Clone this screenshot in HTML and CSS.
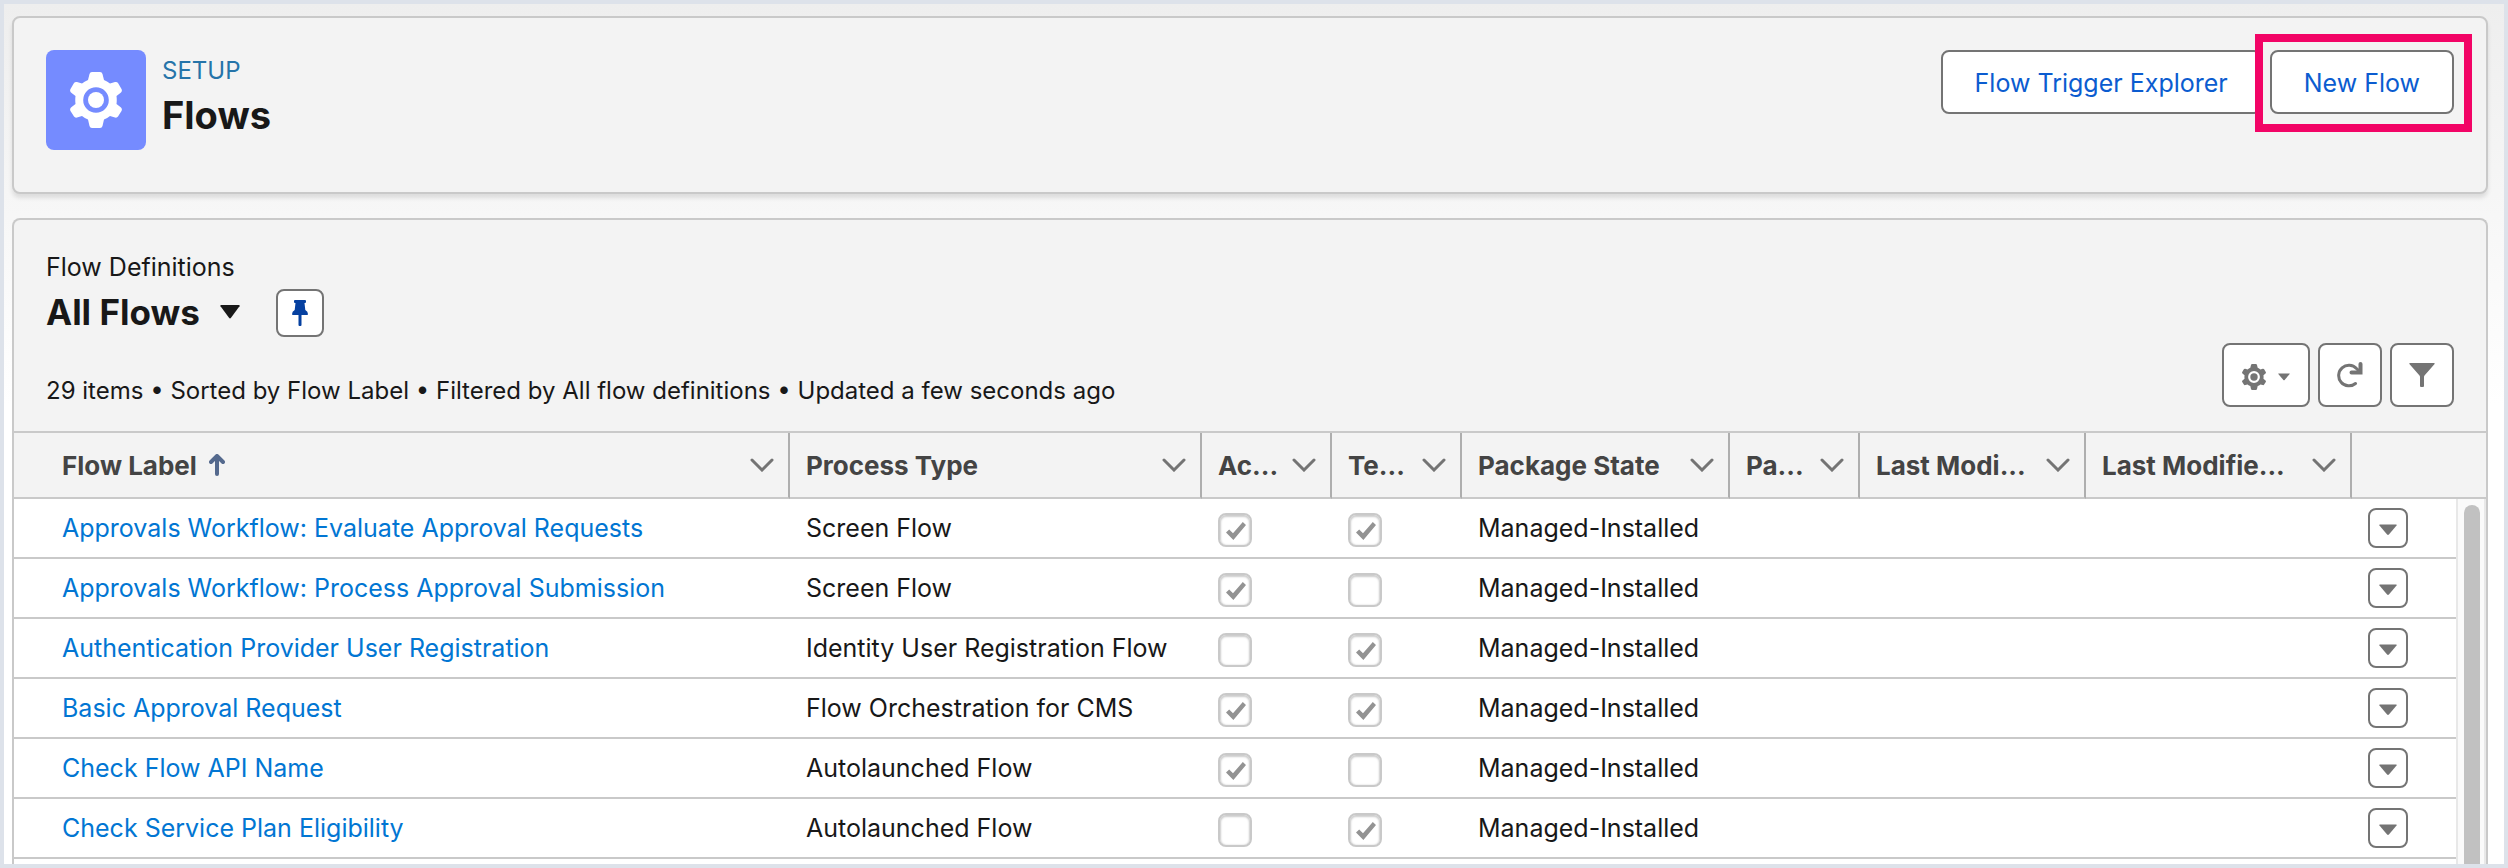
FILE: index.html
```html
<!DOCTYPE html>
<html lang="en">

<head>
    <meta charset="UTF-8">
    <meta name="viewport" content="width=device-width, initial-scale=1.0">
    <title>Flows | Setup</title>
    <link rel="stylesheet" href="styles.css">
</head>

<body>

    <!-- Shared icons -->
    <svg class="sprite" aria-hidden="true">
        <symbol id="gear" viewBox="0 0 52 56">
            <path fill="currentColor" fill-rule="evenodd" d="M22 0h8q2 0 2.500 2l1.500 6q3 1.200 6 3.500l5-1.500q2-.5 3 1l3.500 6q1 2-.5 3.500L46.500 24q.5 4 0 8l4.500 3.500q1.500 1.500.5 3.500L48 44.500q-1 1.500-3 1L40 44q-3 2.500-6 3.500L32.500 54q-.5 2-2.500 2h-8q-2 0-2.500-2L18 47.500q-3-1-6-3.500l-5 1.500q-2 .5-3-1L.5 39q-1-2 .5-3.500L5.500 32q-.5-4 0-8L1 20.500Q-.5 19 .5 17L4 11q1-1.500 3-1l5 1.500Q15 9.200 18 8l1.500-6Q20 0 22 0zM26 15.200a12.800 12.800 0 1 0 0 25.600a12.800 12.800 0 1 0 0-25.600z" />
            <circle cx="26" cy="28" r="8" fill="currentColor" />
        </symbol>
        <symbol id="chevron" viewBox="0 0 24 14">
            <path d="M2 2l10 10L22 2" fill="none" stroke="currentColor" stroke-width="3" stroke-linecap="round" />
        </symbol>
        <symbol id="down" viewBox="0 0 20 12">
            <path d="M1 0h18q1 0 .5 1L11 11q-1 1-2 0L.5 1Q0 0 1 0z" fill="currentColor" />
        </symbol>
    </svg>

    <main class="page">
        <header class="card page-header">
            <div class="header-icon">
                <svg width="52" height="56"><use href="#gear" /></svg>
            </div>
            <div class="header-text">
                <span class="eyebrow">SETUP</span>
                <h1>Flows</h1>
            </div>
            <div class="header-actions">
                <button class="button">Flow Trigger Explorer</button>
                <div class="highlighted">
                    <button class="button">New Flow</button>
                </div>
            </div>
        </header>

        <section class="card list-view">
            <div class="list-header">
                <div class="list-info">
                    <p class="list-object">Flow Definitions</p>
                    <div class="list-name">
                        <button class="list-switch">All Flows
                            <svg width="20" height="14" viewBox="0 0 20 12" preserveAspectRatio="none"><use href="#down" /></svg>
                        </button>
                        <button class="icon-button pin" aria-label="Pin this list view">
                            <svg width="16" height="26" viewBox="0 0 16 26">
                                <path fill="currentColor" d="M3 0h10q1 0 1 1v1q0 1-1 1h-.5l.8 7q2.700 1.500 2.700 4.200 0 .8-1 .8h-5.500v10q0 1-1 1h-1q-1 0-1-1V15H1q-1 0-1-.8Q0 11.500 2.700 10l.8-7H3Q2 3 2 2V1q0-1 1-1z" />
                            </svg>
                        </button>
                    </div>
                    <p class="list-meta">29 items • Sorted by Flow Label • Filtered by All flow definitions • Updated a few seconds ago</p>
                </div>
                <div class="list-actions">
                    <button class="icon-button wide" aria-label="List view controls">
                        <svg width="24" height="26"><use href="#gear" /></svg>
                        <svg width="12" height="8"><use href="#down" /></svg>
                    </button>
                    <button class="icon-button" aria-label="Refresh">
                        <svg width="26" height="26" viewBox="0 0 26 26">
                            <path d="M18.500 21.500A10.300 10.300 0 1 1 19.500 6.500L22 9" fill="none" stroke="currentColor" stroke-width="3" stroke-linecap="round" />
                            <path d="M23.500 2v8.500H14.500" fill="none" stroke="currentColor" stroke-width="4" stroke-linecap="round" />
                        </svg>
                    </button>
                    <button class="icon-button" aria-label="Filter">
                        <svg width="26" height="24" viewBox="0 0 26 24">
                            <path fill="currentColor" d="M1 0h24q1 0 .6 1L15.500 12.500Q15 13 15 14v9q0 1-1 1h-2q-1 0-1-1v-9q0-1-.5-1.500L.4 1Q0 0 1 0z" />
                        </svg>
                    </button>
                </div>
            </div>

            <div class="table-wrap">
                <table>
                    <colgroup>
                        <col>
                        <col class="col-type">
                        <col class="col-small">
                        <col class="col-small">
                        <col class="col-state">
                        <col class="col-small">
                        <col class="col-by">
                        <col class="col-date">
                        <col class="col-menu">
                    </colgroup>
                    <thead>
                        <tr>
                            <th scope="col"><div class="th"><span>Flow Label</span><svg class="sort" width="16" height="22" viewBox="0 0 16 22"><path d="M8 20V4" fill="none" stroke="currentColor" stroke-width="4" stroke-linecap="round" /><path d="M2 8l6-6 6 6" fill="none" stroke="currentColor" stroke-width="4" stroke-linecap="round" stroke-linejoin="round" /></svg><svg class="chevron" width="24" height="14"><use href="#chevron" /></svg></div></th>
                            <th scope="col"><div class="th"><span>Process Type</span><svg class="chevron" width="24" height="14"><use href="#chevron" /></svg></div></th>
                            <th scope="col"><div class="th"><span>Ac...</span><svg class="chevron" width="24" height="14"><use href="#chevron" /></svg></div></th>
                            <th scope="col"><div class="th"><span>Te...</span><svg class="chevron" width="24" height="14"><use href="#chevron" /></svg></div></th>
                            <th scope="col"><div class="th"><span>Package State</span><svg class="chevron" width="24" height="14"><use href="#chevron" /></svg></div></th>
                            <th scope="col"><div class="th"><span>Pa...</span><svg class="chevron" width="24" height="14"><use href="#chevron" /></svg></div></th>
                            <th scope="col"><div class="th"><span>Last Modi...</span><svg class="chevron" width="24" height="14"><use href="#chevron" /></svg></div></th>
                            <th scope="col"><div class="th"><span>Last Modifie...</span><svg class="chevron" width="24" height="14"><use href="#chevron" /></svg></div></th>
                            <th></th>
                        </tr>
                    </thead>
                    <tbody>
                        <tr>
                            <td><a href="#">Approvals Workflow: Evaluate Approval Requests</a></td>
                            <td>Screen Flow</td>
                            <td><input type="checkbox" aria-label="Active" checked disabled></td>
                            <td><input type="checkbox" aria-label="Template" checked disabled></td>
                            <td>Managed-Installed</td>
                            <td></td>
                            <td></td>
                            <td></td>
                            <td><button class="row-menu" aria-label="Show actions"><svg width="18" height="12"><use href="#down" /></svg></button></td>
                        </tr>
                        <tr>
                            <td><a href="#">Approvals Workflow: Process Approval Submission</a></td>
                            <td>Screen Flow</td>
                            <td><input type="checkbox" aria-label="Active" checked disabled></td>
                            <td><input type="checkbox" aria-label="Template" disabled></td>
                            <td>Managed-Installed</td>
                            <td></td>
                            <td></td>
                            <td></td>
                            <td><button class="row-menu" aria-label="Show actions"><svg width="18" height="12"><use href="#down" /></svg></button></td>
                        </tr>
                        <tr>
                            <td><a href="#">Authentication Provider User Registration</a></td>
                            <td>Identity User Registration Flow</td>
                            <td><input type="checkbox" aria-label="Active" disabled></td>
                            <td><input type="checkbox" aria-label="Template" checked disabled></td>
                            <td>Managed-Installed</td>
                            <td></td>
                            <td></td>
                            <td></td>
                            <td><button class="row-menu" aria-label="Show actions"><svg width="18" height="12"><use href="#down" /></svg></button></td>
                        </tr>
                        <tr>
                            <td><a href="#">Basic Approval Request</a></td>
                            <td>Flow Orchestration for CMS</td>
                            <td><input type="checkbox" aria-label="Active" checked disabled></td>
                            <td><input type="checkbox" aria-label="Template" checked disabled></td>
                            <td>Managed-Installed</td>
                            <td></td>
                            <td></td>
                            <td></td>
                            <td><button class="row-menu" aria-label="Show actions"><svg width="18" height="12"><use href="#down" /></svg></button></td>
                        </tr>
                        <tr>
                            <td><a href="#">Check Flow API Name</a></td>
                            <td>Autolaunched Flow</td>
                            <td><input type="checkbox" aria-label="Active" checked disabled></td>
                            <td><input type="checkbox" aria-label="Template" disabled></td>
                            <td>Managed-Installed</td>
                            <td></td>
                            <td></td>
                            <td></td>
                            <td><button class="row-menu" aria-label="Show actions"><svg width="18" height="12"><use href="#down" /></svg></button></td>
                        </tr>
                        <tr>
                            <td><a href="#">Check Service Plan Eligibility</a></td>
                            <td>Autolaunched Flow</td>
                            <td><input type="checkbox" aria-label="Active" disabled></td>
                            <td><input type="checkbox" aria-label="Template" checked disabled></td>
                            <td>Managed-Installed</td>
                            <td></td>
                            <td></td>
                            <td></td>
                            <td><button class="row-menu" aria-label="Show actions"><svg width="18" height="12"><use href="#down" /></svg></button></td>
                        </tr>
                    </tbody>
                </table>
                <div class="scrollbar"><div class="thumb"></div></div>
            </div>
        </section>
    </main>

</body>

</html>
```

FILE: styles.css
```css
* {
    box-sizing: border-box;
}

body {
    margin: 0;
    font-family: Inter, "Liberation Sans", sans-serif;
    font-size: 25px;
    color: #181818;
}

h1,
p {
    margin: 0;
}

button {
    font-family: inherit;
    cursor: pointer;
}

svg {
    display: block;
    flex-shrink: 0;
}

.sprite {
    position: absolute;
    width: 0;
    height: 0;
}

.page {
    height: 100vh;
    border: 4px solid #dde2ea;
    padding: 12px 16px 0 8px;
    background: linear-gradient(#eeeeee, #ffffff 400px);
    overflow: hidden;
    display: flex;
    flex-direction: column;
    gap: 24px;
}

.card {
    border: 2px solid #c9c9c9;
    border-radius: 8px;
    background-color: #f3f3f3;
}

/* Page header */
.page-header {
    display: flex;
    align-items: flex-start;
    padding: 32px 32px 42px;
    box-shadow: 0 4px 4px rgba(0, 0, 0, 0.1);
}

.header-icon {
    width: 100px;
    height: 100px;
    border-radius: 8px;
    background-color: #758bff;
    color: #fff;
    display: flex;
    align-items: center;
    justify-content: center;
}

.header-text {
    flex: 1;
    padding: 5px 0 0 16px;
}

.eyebrow {
    display: block;
    font-size: 24px;
    line-height: 32px;
    color: #2574a9;
}

h1 {
    font-size: 38px;
    line-height: 56px;
    font-weight: 700;
}

.header-actions {
    display: flex;
    gap: 8px;
}

.button {
    height: 64px;
    padding: 2px 32px 0;
    border: 2px solid #747474;
    border-radius: 8px;
    background-color: #fff;
    color: #0b5cd0;
    font-size: 25px;
    white-space: nowrap;
}

.highlighted {
    position: relative;
}

/* Frame drawn around the button */
.highlighted::after {
    content: "";
    position: absolute;
    inset: -16px -18px -18px -15px;
    border: 8px solid #f20466;
    pointer-events: none;
}

/* List view */
.list-view {
    flex: 1 0 auto;
    border-bottom: none;
    border-radius: 8px 8px 0 0;
    display: flex;
    flex-direction: column;
}

.list-header {
    display: flex;
    justify-content: space-between;
    align-items: flex-end;
    padding: 31px 32px 24px;
}

.list-object {
    line-height: 32px;
}

.list-name {
    display: flex;
    align-items: center;
    gap: 36px;
    height: 60px;
}

.list-switch {
    display: flex;
    align-items: center;
    gap: 20px;
    border: none;
    padding: 0 0 2px;
    background: none;
    color: #181818;
    font-size: 35px;
    font-weight: 700;
}

.list-meta {
    font-size: 24px;
    line-height: 32px;
    padding-top: 32px;
}

.list-actions {
    display: flex;
    gap: 8px;
}

.icon-button {
    width: 64px;
    height: 64px;
    display: flex;
    align-items: center;
    justify-content: center;
    border: 2px solid #747474;
    border-radius: 8px;
    padding: 0;
    background-color: #fff;
    color: #747474;
}

.icon-button.wide {
    width: 88px;
    gap: 12px;
    padding-top: 4px;
}

.icon-button.pin {
    width: 48px;
    height: 48px;
    color: #0540a0;
}

/* Table */
.table-wrap {
    flex: 1;
    position: relative;
    border-top: 2px solid #c9c9c9;
    background-color: #fff;
}

table {
    width: 100%;
    table-layout: fixed;
    border-collapse: separate;
    border-spacing: 0;
}

.col-type {
    width: 412px;
}

.col-small {
    width: 130px;
}

.col-state {
    width: 268px;
}

.col-by {
    width: 226px;
}

.col-date {
    width: 266px;
}

.col-menu {
    width: 134px;
}

th {
    height: 66px;
    padding: 0 14px 0 16px;
    background-color: #f3f3f3;
    border-right: 2px solid #aeaeae;
    border-bottom: 2px solid #c9c9c9;
    color: #444;
    font-size: 26px;
    font-weight: 700;
    text-align: left;
    white-space: nowrap;
}

th:last-child {
    border-right: none;
}

.th {
    display: flex;
    align-items: center;
}

.sort {
    margin-left: 12px;
    color: #54698d;
}

.chevron {
    margin-left: auto;
    color: #747474;
}

td {
    height: 60px;
    padding: 0 16px;
    border-bottom: 2px solid #c9c9c9;
    white-space: nowrap;
}

th:first-child,
td:first-child {
    padding-left: 48px;
}

td a {
    color: #0176d3;
    text-decoration: none;
}

td a:hover {
    text-decoration: underline;
}

td input {
    appearance: none;
    display: block;
    width: 34px;
    height: 34px;
    margin: 4px 0 0;
    border: 2px solid #c9c9c9;
    border-radius: 8px;
    background-color: #fff;
    box-shadow: inset 0 1px 2px 1px #ccc;
}

/* Tick mark */
td input:checked::before {
    content: "";
    display: block;
    width: 20px;
    height: 18px;
    margin: 7px 6px;
    background-color: #939393;
    clip-path: polygon(0 58%, 16% 42%, 35% 62%, 84% 0, 100% 16%, 37% 100%);
}

.row-menu {
    display: flex;
    align-items: center;
    justify-content: center;
    width: 40px;
    height: 40px;
    padding: 4px 0 0;
    border: 2px solid #747474;
    border-radius: 8px;
    background-color: #fff;
    color: #747474;
}

/* Scrollbar over the right edge of the rows */
.scrollbar {
    position: absolute;
    top: 66px;
    right: 0;
    bottom: 0;
    width: 30px;
    padding: 6px 4px 0 6px;
    background-color: #fafafa;
    border-left: 2px solid #e8e8e8;
    border-right: 2px solid #e8e8e8;
}

.thumb {
    width: 16px;
    height: 100%;
    border-radius: 8px 8px 0 0;
    background-color: #c1c1c1;
}
```
